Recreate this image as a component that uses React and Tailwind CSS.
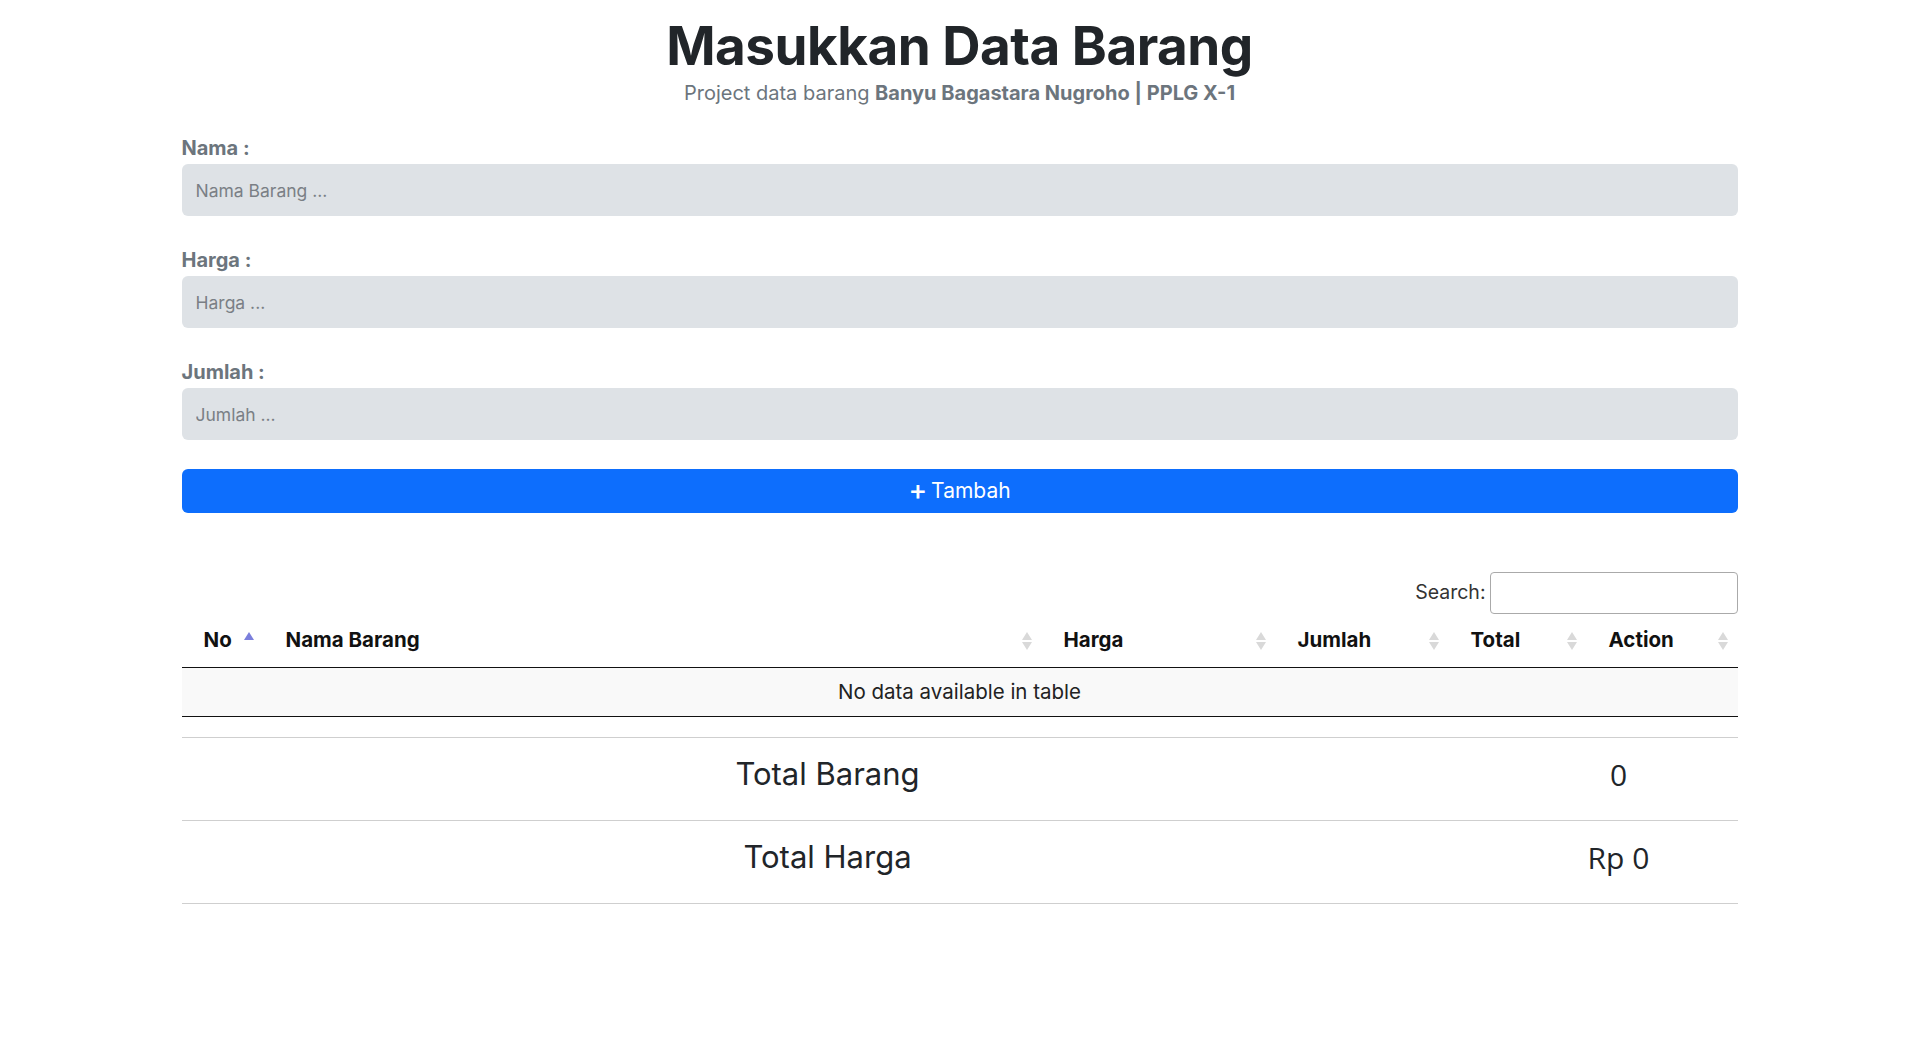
import React, { useState } from "react";

const SortIcon = ({ active }) => (
  <span className="flex flex-col items-center gap-[2px]">
    <span
      className={
        active
          ? "w-0 h-0 border-l-[5px] border-r-[5px] border-b-[8px] border-l-transparent border-r-transparent border-b-[#7b7fdc]"
          : "w-0 h-0 border-l-[5px] border-r-[5px] border-b-[8px] border-l-transparent border-r-transparent border-b-[#d9d9d9]"
      }
    />
    <span
      className={
        active
          ? "w-0 h-0 border-l-[5px] border-r-[5px] border-t-[8px] border-l-transparent border-r-transparent border-t-transparent"
          : "w-0 h-0 border-l-[5px] border-r-[5px] border-t-[8px] border-l-transparent border-r-transparent border-t-[#d9d9d9]"
      }
    />
  </span>
);

const columns = [
  { label: "No", width: "w-[82px]", active: true },
  { label: "Nama Barang", width: "w-[778px]" },
  { label: "Harga", width: "w-[234px]" },
  { label: "Jumlah", width: "w-[173px]" },
  { label: "Total", width: "w-[138px]" },
  { label: "Action", width: "w-[151px]" },
];

const Field = ({ label, placeholder }) => (
  <div className="flex flex-col gap-[2px]">
    <label className="text-[20px] leading-[28px] font-bold text-[#6c757d]">{label}</label>
    <input
      placeholder={placeholder}
      className="h-[52px] w-full rounded-[6px] bg-[#dee2e6] px-[14px] text-[17.5px] text-[#212529] placeholder:text-[#7a7f85] outline-none"
    />
  </div>
);

export default function App() {
  const [items] = useState([]);
  const totalBarang = items.length;
  const totalHarga = 0;

  return (
    <div className="min-h-screen bg-white font-['Inter',sans-serif] text-[#212529]">
      <div className="w-[1556px] mx-auto pt-[16px]">
        <h1 className="text-center text-[53px] leading-[60px] font-bold tracking-[-0.5px] text-[#212529]">
          Masukkan Data Barang
        </h1>
        <p className="mt-[2px] text-center text-[20px] leading-[30px] text-[#6c757d]">
          Project data barang <span className="font-bold">Banyu Bagastara Nugroho | PPLG X-1</span>
        </p>

        <div className="mt-[26px] flex flex-col gap-[30px]">
          <Field label="Nama :" placeholder="Nama Barang ..." />
          <Field label="Harga :" placeholder="Harga ..." />
          <Field label="Jumlah :" placeholder="Jumlah ..." />
          <button className="mt-[-1px] h-[44px] w-full rounded-[6px] bg-[#0d6efd] text-white text-[21px] flex items-center justify-center gap-[4px]">
            <span className="text-[28px] leading-none font-medium -mt-[2px]">+</span>
            <span>Tambah</span>
          </button>
        </div>

        <div className="mt-[59px] flex justify-end items-center gap-[4px]">
          <span className="text-[19.5px] text-[#333]">Search:</span>
          <input className="h-[42px] w-[248px] rounded-[4px] border border-[#aaa] px-2 outline-none" />
        </div>

        <div className="flex h-[54px] items-center border-b border-[#111]">
          {columns.map((c) => (
            <div key={c.label} className={`${c.width} flex items-center justify-between pl-[22px] pr-[10px]`}>
              <span className="text-[20.5px] font-bold text-[#111]">{c.label}</span>
              <SortIcon active={c.active} />
            </div>
          ))}
        </div>
        <div className="flex h-[49px] items-center justify-center bg-[#f9f9f9] border-b border-[#111] text-[20.5px] text-[#222]">
          No data available in table
        </div>

        <div className="mt-[20px] border-t border-[#cfcfcf]">
          <div className="grid grid-cols-[1292px_1fr] h-[83px] items-center pb-[10px] border-b border-[#cfcfcf] text-[31px]">
            <div className="text-center">Total Barang</div>
            <div className="pl-[26px] text-center text-[30px] font-['Open_Sans',sans-serif]">{totalBarang}</div>
          </div>
          <div className="grid grid-cols-[1292px_1fr] h-[83px] items-center pb-[10px] border-b border-[#cfcfcf] text-[31px]">
            <div className="text-center">Total Harga</div>
            <div className="pl-[26px] text-center text-[30px] font-['Open_Sans',sans-serif]">Rp {totalHarga}</div>
          </div>
        </div>
      </div>
    </div>
  );
}
